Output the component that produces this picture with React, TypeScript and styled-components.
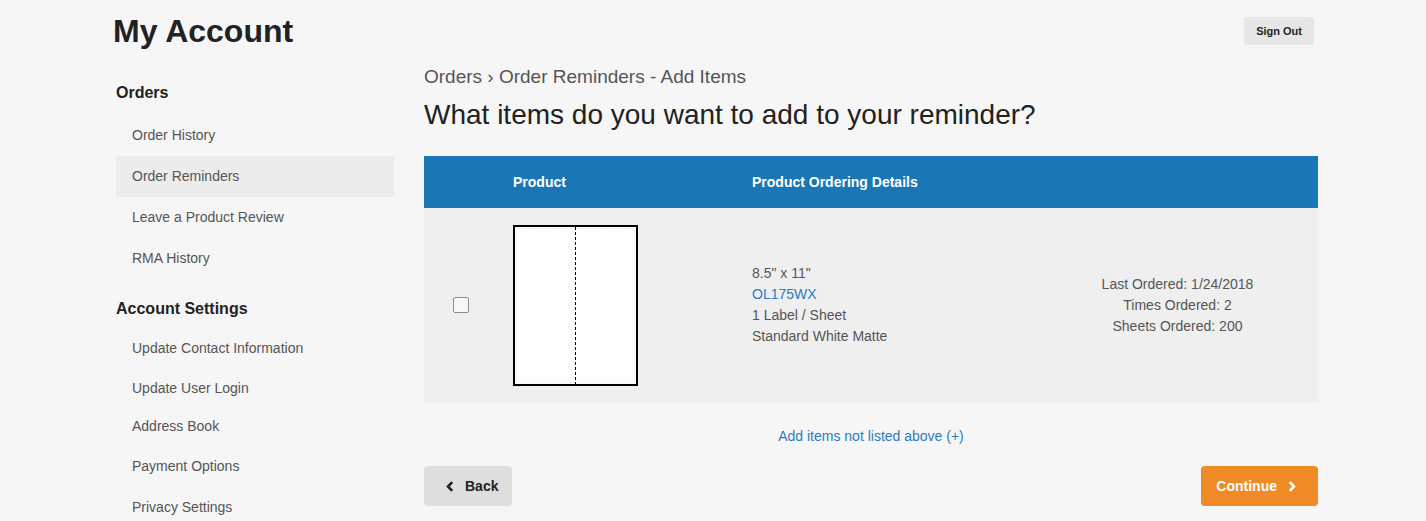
import styled, { createGlobalStyle } from "styled-components";

const GlobalStyle = createGlobalStyle`
  html, body {
    margin: 0;
    padding: 0;
    background: #f6f6f6;
    overflow: hidden;
  }
  body {
    font-family: "Liberation Sans", Arial, sans-serif;
    color: #222;
  }
  * {
    box-sizing: border-box;
  }
`;

const Page = styled.div`
  width: 1210px;
  margin: 0 auto;
`;

const Header = styled.header`
  height: 62px;
  display: flex;
  align-items: center;
  justify-content: space-between;
  padding: 0 4px 0 5px;
`;

const Title = styled.h1`
  margin: 0;
  font-size: 32px;
  line-height: 37px;
  font-weight: bold;
  color: #222;
`;

const SignOutButton = styled.button`
  height: 28px;
  padding: 0 12px;
  border: none;
  border-radius: 3px;
  background: #e6e6e6;
  color: #222;
  font-family: "Liberation Sans", Arial, sans-serif;
  font-size: 11px;
  font-weight: bold;
`;

const Body = styled.div`
  display: grid;
  grid-template-columns: 278px 894px;
  column-gap: 30px;
  padding-left: 8px;
`;

const Sidebar = styled.nav`
  display: flex;
  flex-direction: column;
`;

const SideHeading = styled.h3<{ $first?: boolean }>`
  margin: ${(p) => (p.$first ? "20.5px 0 12px" : "20px 0 9px")};
  font-size: 16px;
  line-height: 20px;
  font-weight: bold;
  color: #222;
`;

const SideItem = styled.a<{ $active?: boolean; $h: number }>`
  display: flex;
  align-items: center;
  height: ${(p) => p.$h}px;
  padding-left: 16px;
  font-size: 14px;
  color: #555;
  text-decoration: none;
  background: ${(p) => (p.$active ? "#ececec" : "transparent")};
`;

const Main = styled.main`
  display: flex;
  flex-direction: column;
`;

const Breadcrumb = styled.div`
  margin-top: 4px;
  font-size: 19px;
  line-height: 22px;
  color: #555;
`;

const Heading = styled.h2`
  margin: 11px 0 25px;
  font-size: 28px;
  line-height: 32px;
  font-weight: normal;
  color: #222;
`;

const Table = styled.div`
  display: flex;
  flex-direction: column;
`;

const Columns = "74px 239px 300px 1fr";

const HeadRow = styled.div`
  display: grid;
  grid-template-columns: ${Columns};
  align-items: center;
  height: 52px;
  background: #1b76b5;
  color: #fff;
  font-size: 14px;
  font-weight: bold;
`;

const HeadCell = styled.div`
  padding-left: 15px;
`;

const ItemRow = styled.div`
  display: grid;
  grid-template-columns: ${Columns};
  align-items: center;
  height: 194px;
  background: #efefef;
`;

const CheckCell = styled.div`
  display: flex;
  justify-content: center;
`;

const Checkbox = styled.input`
  appearance: none;
  width: 16px;
  height: 16px;
  margin: 0;
  border: 1px solid #8d8d8d;
  border-radius: 2px;
  background: #f7f7f7;
`;

const ProductCell = styled.div`
  padding-left: 15px;
  display: flex;
`;

const DetailsCell = styled.div`
  padding-left: 15px;
  font-size: 14px;
  line-height: 21px;
  color: #555;
`;

const Sku = styled.a`
  display: block;
  color: #2b7bc2;
  text-decoration: none;
`;

const StatsCell = styled.div`
  text-align: center;
  font-size: 14px;
  line-height: 21px;
  color: #555;
`;

const AddLink = styled.a`
  align-self: center;
  margin-top: 24px;
  font-size: 14px;
  line-height: 20px;
  color: #2b7bc2;
  text-decoration: none;
`;

const Actions = styled.div`
  margin-top: 20px;
  display: flex;
  justify-content: space-between;
`;

const ActionButton = styled.button<{ $primary?: boolean }>`
  display: flex;
  align-items: center;
  gap: 11px;
  height: 40px;
  padding: ${(p) => (p.$primary ? "0 22px 0 15px" : "0 14px 0 22px")};
  border: none;
  border-radius: 4px;
  background: ${(p) => (p.$primary ? "#f08a27" : "#dedede")};
  color: ${(p) => (p.$primary ? "#fff" : "#222")};
  font-family: "Liberation Sans", Arial, sans-serif;
  font-size: 14px;
  font-weight: bold;

  svg {
    flex: none;
  }
`;

const Chevron = ({ dir }: { dir: "left" | "right" }) => (
  <svg width="8" height="11" viewBox="0 0 8 11">
    <polyline
      points={dir === "left" ? "6.2,1.2 2,5.5 6.2,9.8" : "1.8,1.2 6,5.5 1.8,9.8"}
      fill="none"
      stroke="currentColor"
      strokeWidth="2.6"
      strokeLinejoin="miter"
    />
  </svg>
);

const SheetPreview = () => (
  <svg width="125" height="161" viewBox="0 0 125 161">
    <rect x="1" y="1" width="123" height="159" fill="#fdfdfd" stroke="#000" strokeWidth="2" />
    <rect x="3.5" y="3.5" width="118" height="154" fill="none" stroke="#e2e2e2" strokeWidth="0.8" strokeDasharray="1 2" />
    <line x1="62.5" y1="2" x2="62.5" y2="159" stroke="#000" strokeWidth="1" strokeDasharray="3 2" />
  </svg>
);

const orders = [
  { label: "Order History" },
  { label: "Order Reminders", active: true },
  { label: "Leave a Product Review" },
  { label: "RMA History" },
];

const settings = [
  { label: "Update Contact Information", h: 41 },
  { label: "Update User Login", h: 38 },
  { label: "Address Book", h: 39 },
  { label: "Payment Options", h: 41 },
  { label: "Privacy Settings", h: 40 },
];

const App = () => {
  return (
    <>
      <GlobalStyle />
      <Page>
        <Header>
          <Title>My Account</Title>
          <SignOutButton>Sign Out</SignOutButton>
        </Header>
        <Body>
          <Sidebar>
            <SideHeading $first>Orders</SideHeading>
            {orders.map((o) => (
              <SideItem key={o.label} $h={41} $active={o.active}>
                {o.label}
              </SideItem>
            ))}
            <SideHeading>Account Settings</SideHeading>
            {settings.map((s) => (
              <SideItem key={s.label} $h={s.h}>
                {s.label}
              </SideItem>
            ))}
          </Sidebar>
          <Main>
            <Breadcrumb>Orders › Order Reminders - Add Items</Breadcrumb>
            <Heading>What items do you want to add to your reminder?</Heading>
            <Table>
              <HeadRow>
                <div />
                <HeadCell>Product</HeadCell>
                <HeadCell>Product Ordering Details</HeadCell>
                <div />
              </HeadRow>
              <ItemRow>
                <CheckCell>
                  <Checkbox type="checkbox" />
                </CheckCell>
                <ProductCell>
                  <SheetPreview />
                </ProductCell>
                <DetailsCell>
                  <div>8.5" x 11"</div>
                  <Sku href="#">OL175WX</Sku>
                  <div>1 Label / Sheet</div>
                  <div>Standard White Matte</div>
                </DetailsCell>
                <StatsCell>
                  <div>Last Ordered: 1/24/2018</div>
                  <div>Times Ordered: 2</div>
                  <div>Sheets Ordered: 200</div>
                </StatsCell>
              </ItemRow>
            </Table>
            <AddLink href="#">Add items not listed above (+)</AddLink>
            <Actions>
              <ActionButton>
                <Chevron dir="left" />
                Back
              </ActionButton>
              <ActionButton $primary>
                Continue
                <Chevron dir="right" />
              </ActionButton>
            </Actions>
          </Main>
        </Body>
      </Page>
    </>
  );
};

export default App;
